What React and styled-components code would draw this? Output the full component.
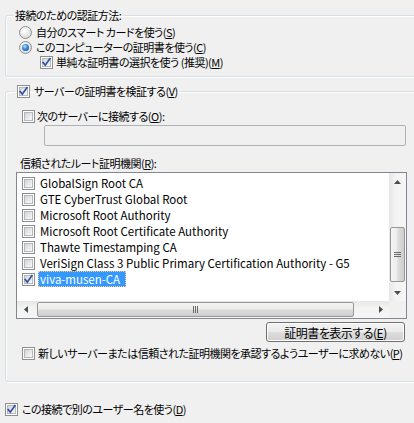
import styled, { createGlobalStyle } from "styled-components";

const Global = createGlobalStyle`
    html, body {
        margin: 0;
        background: #f0f0f0;
        overflow: hidden;
    }
    body {
        font-family: "Noto Sans CJK JP", "Noto Sans", sans-serif;
        font-size: 11px;
        letter-spacing: -0.5px;
        color: #000;
        font-feature-settings: "palt";
    }
`

const Page = styled.div`
    width: 414px;
    height: 423px;
    padding: 7px 0 0 5px;
    box-sizing: border-box;
    display: flex;
    flex-direction: column;
    overflow: hidden;
`

const Group = styled.fieldset`
    margin: ${props => props.$top || 0}px 0 0 0;
    padding: 0 0 ${props => props.$bottom || 0}px 0;
    width: 430px;
    flex: none;
    min-inline-size: 0;
    border: 1px solid #d5dfe5;
    border-radius: 3px;
    box-shadow: inset 1px 1px 0 #fff, 1px 1px 0 #fff;
    display: flex;
    flex-direction: column;
`

const Legend = styled.legend`
    margin-left: ${props => props.$left}px;
    padding: 0 2px;
    height: 16px;
    line-height: 16px;
    display: flex;
    align-items: center;
    gap: 4px;
    white-space: nowrap;
`

const Row = styled.div`
    display: flex;
    align-items: center;
    gap: ${props => props.$gap ?? 4}px;
    height: 15px;
    line-height: 15px;
    margin-top: ${props => props.$top || 0}px;
    margin-left: ${props => props.$left || 0}px;
    white-space: nowrap;
`

const Key = styled.span`
    text-decoration: underline;
    text-underline-offset: 1px;
`

const BoxOuter = styled.span`
    position: relative;
    flex: none;
    width: 13px;
    height: 13px;
    box-sizing: border-box;
    border: 1px solid #8e8f8f;
    background: #fff;
    padding: 1px;
    display: inline-flex;
`

const BoxInner = styled.span`
    flex: 1;
    border: 1px solid #b4b9be;
    background: linear-gradient(135deg, #d2d4d8 0%, #e9eaec 55%, #f8f8f8 100%);
`

const Tick = styled.svg`
    position: absolute;
    left: 0;
    top: 0;
    width: 11px;
    height: 11px;
`

const Checkbox = ({ checked }) => (
    <BoxOuter>
        <BoxInner />
        {checked && (
            <Tick viewBox="0 0 11 11">
                <path d="M2.2 5.6 L4.3 8.2 L8.9 1.8" fill="none" stroke="#3550a0" strokeWidth="1.7" strokeLinecap="square" />
            </Tick>
        )}
    </BoxOuter>
)

const RadioOuter = styled.span`
    flex: none;
    width: 13px;
    height: 13px;
    box-sizing: border-box;
    border-radius: 50%;
    border: 1px solid #8e8f8f;
    background: radial-gradient(circle at 40% 35%, #ffffff 0%, #eaeaea 45%, #cfcfcf 100%);
    display: inline-flex;
    align-items: center;
    justify-content: center;
`

const RadioDot = styled.span`
    width: 7px;
    height: 7px;
    border-radius: 50%;
    background: radial-gradient(circle at 40% 35%, #bfe6ff 0%, #3b8fe0 40%, #0d3f91 100%);
`

const Radio = ({ checked }) => (
    <RadioOuter>{checked && <RadioDot />}</RadioOuter>
)

const TextInput = styled.div`
    margin: 1px 0 0 38px;
    width: 362px;
    height: 21px;
    box-sizing: border-box;
    border: 1px solid #adb2b5;
    border-radius: 2px;
    background: #f0f0f0;
`

const ListBox = styled.div`
    margin: 1px 0 0 10px;
    width: 391px;
    height: 147px;
    box-sizing: border-box;
    border: 1px solid #828790;
    background: #fff;
    display: grid;
    grid-template-columns: 1fr 17px;
    grid-template-rows: 1fr 17px;
`

const Items = styled.div`
    padding: 2px 0 0 5px;
    overflow: hidden;
    font-size: 11.5px;
    letter-spacing: 0;
`

const Item = styled.div`
    display: flex;
    align-items: center;
    height: 16px;
    gap: 3px;
    white-space: nowrap;
`

const ItemText = styled.span`
    padding: 0 ${props => props.$selected ? 6 : 2}px 0 2px;
    height: 16px;
    line-height: 16px;
    box-sizing: border-box;
    background: ${props => props.$selected ? "#3399ff" : "transparent"};
    color: ${props => props.$selected ? "#fff" : "#000"};
    outline: ${props => props.$selected ? "1px dotted #ffcc80" : "none"};
    outline-offset: -1px;
`

const VScroll = styled.div`
    display: flex;
    flex-direction: column;
    background: linear-gradient(90deg, #e6e6e6 0%, #f3f3f3 40%, #f6f6f6 100%);
`

const HScroll = styled.div`
    display: flex;
    background: linear-gradient(180deg, #e6e6e6 0%, #f3f3f3 40%, #f6f6f6 100%);
`

const Corner = styled.div`
    background: #f0f0f0;
`

const Arrow = styled.div`
    flex: none;
    width: 17px;
    height: 17px;
    display: flex;
    align-items: center;
    justify-content: center;
`

const Track = styled.div`
    flex: 1;
    display: flex;
    flex-direction: ${props => props.$vertical ? "column" : "row"};
`

const Thumb = styled.div`
    box-sizing: border-box;
    border: 1px solid #979797;
    border-radius: 2px;
    display: flex;
    align-items: center;
    justify-content: center;
    ${props => props.$vertical ? `
        width: 15px;
        margin-left: 1px;
        background: linear-gradient(90deg, #f5f5f5 0%, #ececec 45%, #dcdcdc 55%, #cdcdcd 100%);
    ` : `
        height: 15px;
        margin-top: 1px;
        background: linear-gradient(180deg, #f5f5f5 0%, #ececec 45%, #dcdcdc 55%, #cdcdcd 100%);
    `}
`

const Grip = styled.svg`
    display: block;
`

const Button = styled.div`
    margin: 3px 0 0 260px;
    width: 139px;
    height: 20px;
    box-sizing: border-box;
    border: 1px solid #707070;
    border-radius: 3px;
    box-shadow: inset 0 0 0 1px #fcfcfc;
    background: linear-gradient(180deg, #f2f2f2 0%, #ebebeb 48%, #dddddd 52%, #cfcfcf 100%);
    display: flex;
    align-items: center;
    justify-content: center;
    white-space: nowrap;
    font-size: 12px;
`

const Tri = ({ dir }) => {
    const pts = {
        up: "0,4 3.5,0 7,4",
        down: "0,0 7,0 3.5,4",
        left: "4,0 4,7 0,3.5",
        right: "0,0 0,7 4,3.5",
    }[dir]
    const vertical = dir === "up" || dir === "down"
    return (
        <svg width={vertical ? 7 : 4} height={vertical ? 4 : 7}>
            <polygon points={pts} fill="#4d4d4d" />
        </svg>
    )
}

const certs = [
    { name: "GlobalSign Root CA" },
    { name: "GTE CyberTrust Global Root" },
    { name: "Microsoft Root Authority" },
    { name: "Microsoft Root Certificate Authority" },
    { name: "Thawte Timestamping CA" },
    { name: "VeriSign Class 3 Public Primary Certification Authority - G5" },
    { name: "viva-musen-CA", checked: true, selected: true },
]

export default function App() {
    return (
        <>
            <Global />
            <Page>
                <Group $bottom={6}>
                    <Legend $left={7}>接続のための認証方法:</Legend>
                    <Row $top={2} $left={13} $gap={4}>
                        <Radio />
                        <span>自分のスマート カードを使う(<Key>S</Key>)</span>
                    </Row>
                    <Row $left={13} $gap={4}>
                        <Radio checked />
                        <span>このコンピューターの証明書を使う(<Key>C</Key>)</span>
                    </Row>
                    <Row $left={34} $gap={3}>
                        <Checkbox checked />
                        <span>単純な証明書の選択を使う (推奨)(<Key>M</Key>)</span>
                    </Row>
                </Group>

                <Group $top={6} $bottom={20}>
                    <Legend $left={9}>
                        <Checkbox checked />
                        <span>サーバーの証明書を検証する(<Key>V</Key>)</span>
                    </Legend>
                    <Row $top={10} $left={16} $gap={2}>
                        <Checkbox />
                        <span>次のサーバーに接続する(<Key>O</Key>):</span>
                    </Row>
                    <TextInput />
                    <Row $top={10} $left={14}>
                        <span>信頼されたルート証明機関(<Key>R</Key>):</span>
                    </Row>
                    <ListBox>
                        <Items>
                            {certs.map(c => (
                                <Item key={c.name}>
                                    <Checkbox checked={c.checked} />
                                    <ItemText $selected={c.selected}>{c.name}</ItemText>
                                </Item>
                            ))}
                        </Items>
                        <VScroll>
                            <Arrow><Tri dir="up" /></Arrow>
                            <Track $vertical>
                                <Thumb $vertical style={{ marginTop: 37, height: 55 }}>
                                    <Grip width="7" height="6">
                                        <path d="M0 0.5h7M0 2.5h7M0 4.5h7" stroke="#6a6a6a" strokeWidth="1" />
                                    </Grip>
                                </Thumb>
                            </Track>
                            <Arrow><Tri dir="down" /></Arrow>
                        </VScroll>
                        <HScroll>
                            <Arrow><Tri dir="left" /></Arrow>
                            <Track>
                                <Thumb style={{ marginLeft: 3, width: 317 }}>
                                    <Grip width="6" height="7">
                                        <path d="M0.5 0v7M2.5 0v7M4.5 0v7" stroke="#6a6a6a" strokeWidth="1" />
                                    </Grip>
                                </Thumb>
                            </Track>
                            <Arrow><Tri dir="right" /></Arrow>
                        </HScroll>
                        <Corner />
                    </ListBox>
                    <Button>証明書を表示する(<Key>E</Key>)</Button>
                    <Row $top={4} $left={16} $gap={3}>
                        <Checkbox />
                        <span>新しいサーバーまたは信頼された証明機関を承認するようユーザーに求めない(<Key>P</Key>)</span>
                    </Row>
                </Group>

                <Row $top={20} $gap={4}>
                    <Checkbox checked />
                    <span>この接続で別のユーザー名を使う(<Key>D</Key>)</span>
                </Row>
            </Page>
        </>
    )
}
